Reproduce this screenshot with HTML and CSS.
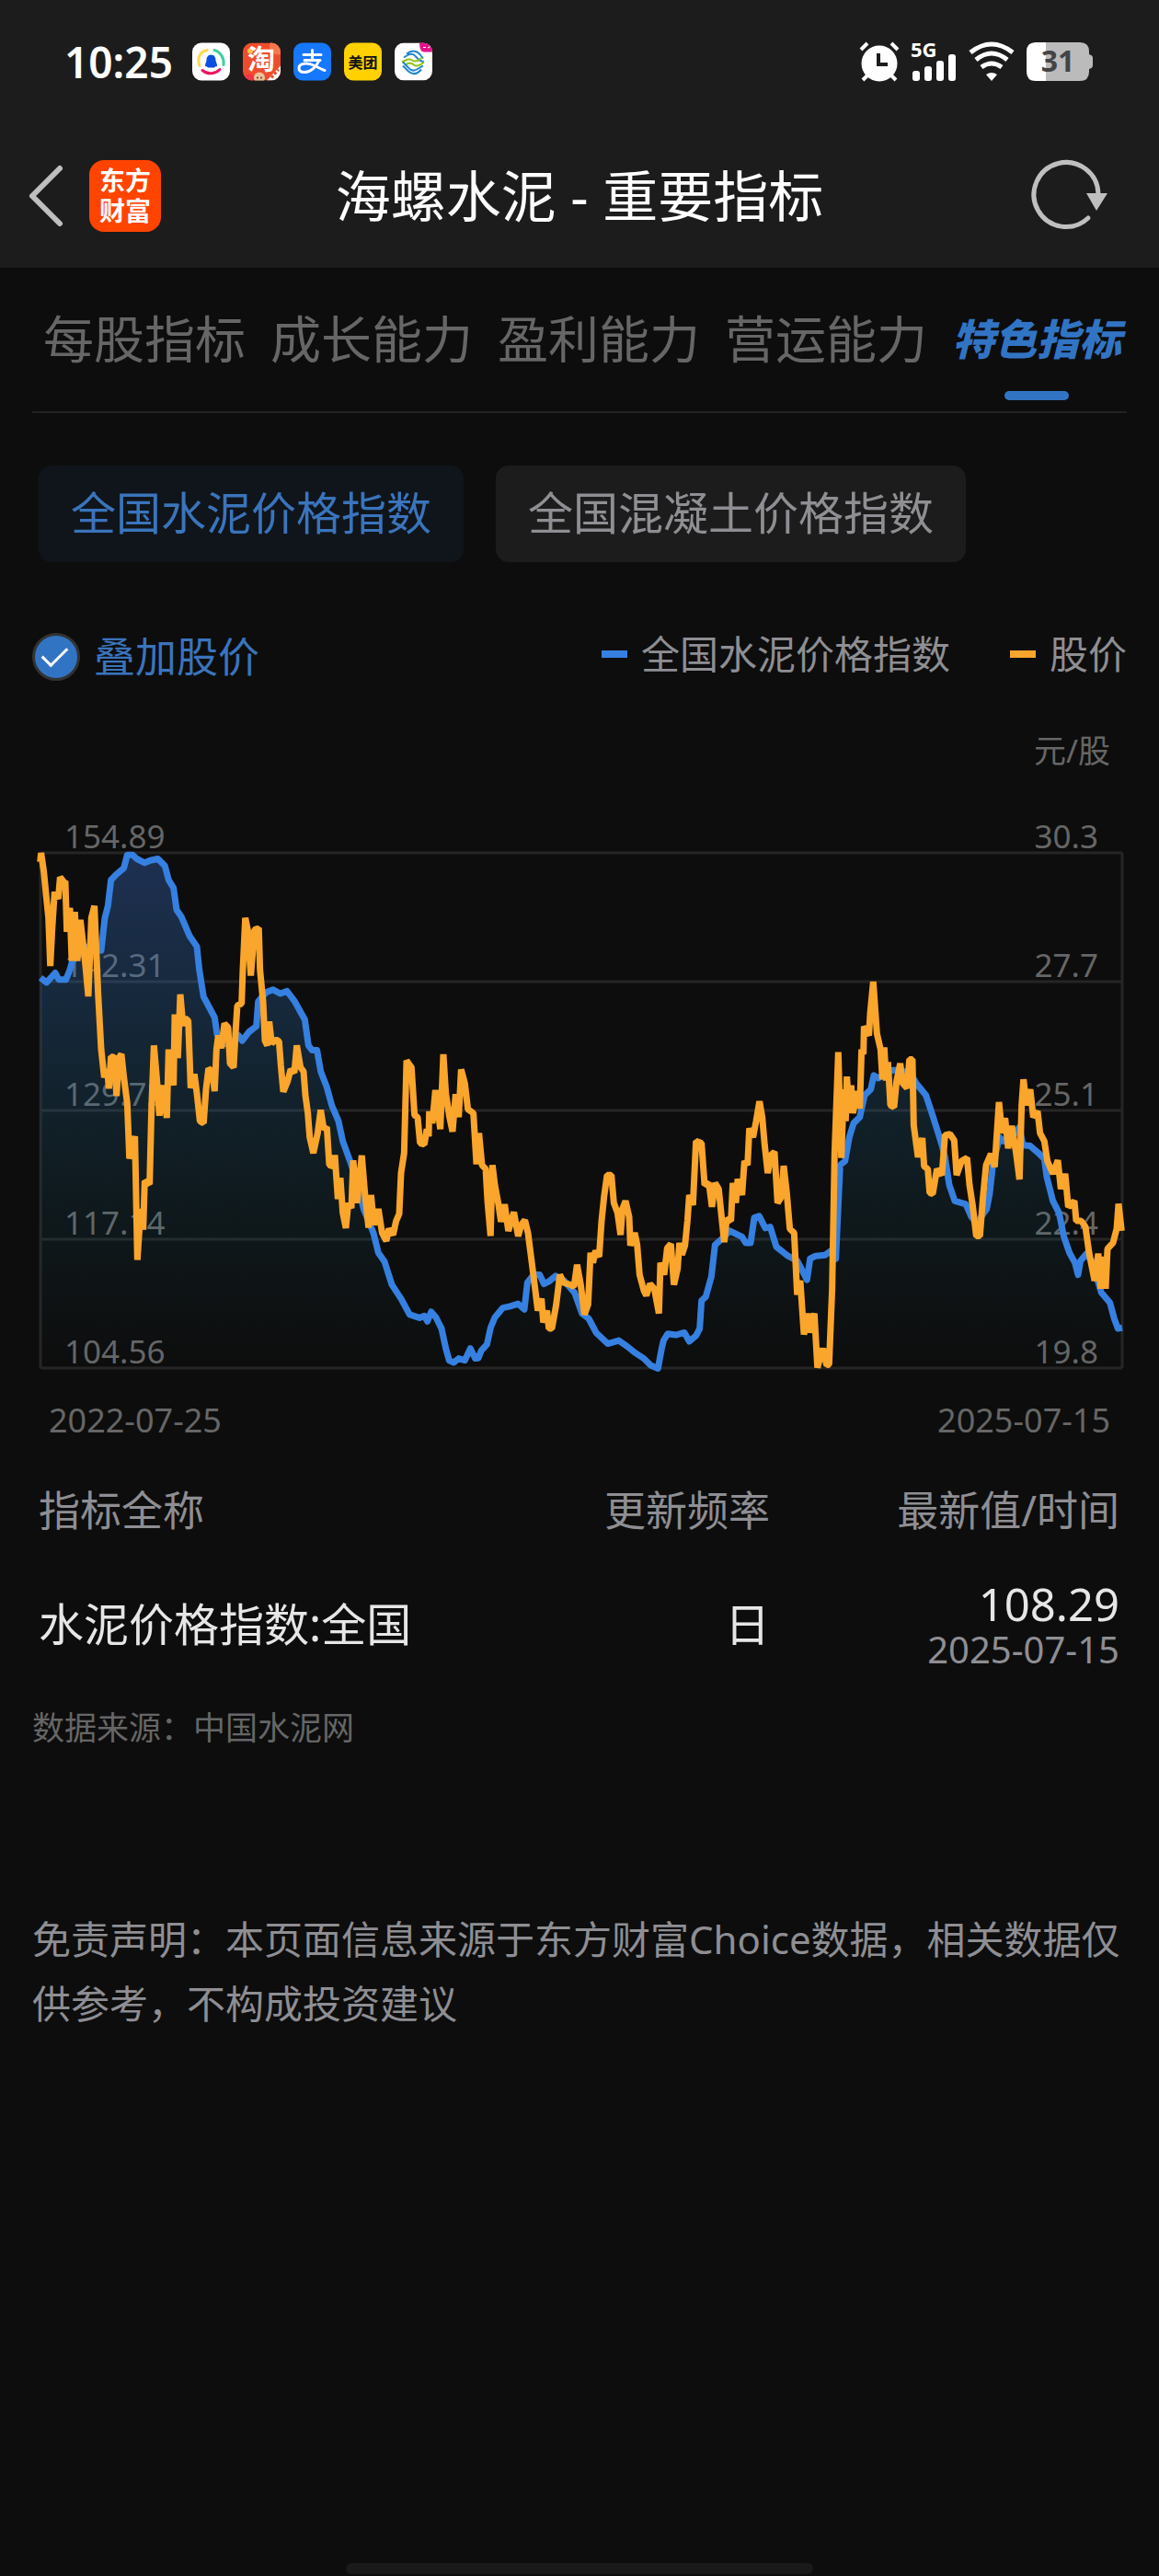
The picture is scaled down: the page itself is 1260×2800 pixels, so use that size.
FILE: index.html
```
<!DOCTYPE html>
<html lang="zh-CN">
<head>
	<meta charset="utf-8">
	<meta name="viewport" content="width=device-width, initial-scale=1.0">
	<title>海螺水泥 - 重要指标</title>
	<link rel="stylesheet" href="styles.css">
</head>
<body>

	<header class="top">
		<div class="status">
			<span class="time">10:25</span>
			<div class="apps">
				<svg class="app" viewBox="0 0 41 41">
					<rect width="41" height="41" rx="10" fill="#fff"/>
					<g fill="none" stroke-width="3" stroke-linecap="round">
						<path d="M8 25C5 17 8 10 16 8" stroke="#ffd84d"/>
						<path d="M24 8c7 2 11 9 10 16" stroke="#3fd0a4"/>
						<path d="M11 30c6 5 14 4 19-1" stroke="#ec1561"/>
					</g>
					<path d="M20.500 13c3.500 0 5 3 5 6 0 2 1.500 3 1.500 6 0 1-1 1-1.500.5L24 27h-7l-1.500-1.500c-.5.5-1.500.5-1.500-.5 0-3 1.500-4 1.500-6 0-3 1.500-6 5-6z" fill="#0a4fe0"/>
				</svg>
				<svg class="app" viewBox="0 0 41 41">
					<clipPath id="round"><rect width="41" height="41" rx="10"/></clipPath>
					<g clip-path="url(#round)">
						<rect width="41" height="41" fill="#ee4d2d"/>
						<circle cx="38" cy="4" r="9" fill="#f7774d"/>
						<path d="M26 41 41 25v16z" fill="#fff"/>
						<path d="M31 38 39 29" stroke="#ee4d2d" stroke-width="3" stroke-dasharray="3 2"/>
						<circle cx="18" cy="38" r="6" fill="#e9c39c"/>
						<circle cx="7" cy="39" r="5" fill="#f0344c"/>
						<circle cx="16" cy="38" r="1" fill="#6a3b20"/>
						<circle cx="20" cy="38" r="1" fill="#6a3b20"/>
						<circle cx="8" cy="9" r="3" fill="#ffc24d"/>
					</g>
					<text x="20" y="28" class="glyph glyph-big" fill="#fff">淘</text>
				</svg>
				<svg class="app" viewBox="0 0 41 41">
					<rect width="41" height="41" rx="10" fill="#1677ff"/>
					<g fill="none" stroke="#fff" stroke-width="3" stroke-linecap="round">
						<path d="M11 13h19M20.500 8v11M12 19h17"/>
						<path d="M28 19c-3 7-9 13-16 13-4 0-6-2-6-4.500 0-6 10-6 17-2.500 5 2.500 8 4 11 5"/>
					</g>
				</svg>
				<svg class="app" viewBox="0 0 41 41">
					<rect width="41" height="41" rx="10" fill="#ffd100"/>
					<text x="20.500" y="27" class="glyph" fill="#111">美团</text>
				</svg>
				<svg class="app" viewBox="0 0 41 41">
					<clipPath id="round2"><rect width="41" height="41" rx="10"/></clipPath>
					<g clip-path="url(#round2)">
						<rect width="41" height="41" fill="#fff"/>
						<path d="M27 0h14v10h-9q-5 0-5-10z" fill="#e4108a"/>
						<path d="M31 5h3m2 0q1 2 3-2" stroke="#fff" stroke-width="1" fill="none"/>
						<g fill="none" stroke-width="2" stroke-linejoin="round">
							<path d="M13 12q8-6 14 0l4 5M10 16l5-3q5-2 8 2l4 4 5 2" stroke="#1f86cc"/>
							<path d="M8 21l4-2q4-2 7 0t7 0l4-3M11 24l5-2q3 0 5 2t7 0l4-3" stroke="#8fc31f"/>
							<path d="M9 25l6 6q7 6 14-2M9 21l6 6q4 5 9 2l7-4" stroke="#1f86cc"/>
						</g>
					</g>
				</svg>
			</div>
			<svg class="signals" viewBox="0 0 260 44">
				<!-- alarm -->
				<ellipse cx="22" cy="24" rx="19.500" ry="19.500" fill="#fff"/>
				<path d="M2 9 9 2M42 9l-7-7" stroke="#fff" stroke-width="4"/>
				<path d="M4 42l6-6M40 42l-6-6" stroke="#fff" stroke-width="4"/>
				<path d="M21 13v12h10" fill="none" stroke="#1c1c1c" stroke-width="4"/>
				<!-- network -->
				<text x="56" y="17" class="net">5G</text>
				<rect x="58" y="32" width="8" height="11" rx="3" fill="#fff"/>
				<rect x="71" y="27" width="8" height="16" rx="3" fill="#fff"/>
				<rect x="84" y="21" width="8" height="22" rx="3" fill="#fff"/>
				<rect x="97" y="14" width="8" height="29" rx="3" fill="#fff"/>
				<!-- wifi -->
				<g fill="none" stroke="#fff" stroke-width="5">
					<path d="M121 12q23-18 46 0"/>
					<path d="M127 20q17-14 34 0"/>
					<path d="M133 28q11-8 22 0"/>
				</g>
				<path d="M138 36q6-4 12 0l-6 7z" fill="#fff"/>
				<!-- battery -->
				<path d="M192 1h48q10 0 10 10v3q4 1 4 4v8q0 3-4 4v3q0 10-10 10h-48z" fill="#bbb"/>
				<path d="M203 1v42h-11q-10 0-10-10V11q0-10 10-10z" fill="#fff"/>
				<text x="216" y="33" class="level">31</text>
			</svg>
		</div>
		<div class="nav">
			<div class="nav-left">
				<button class="icon-button" aria-label="返回">
					<svg class="back" viewBox="0 0 38 66"><path d="M34 3 4 33l30 30" fill="none" stroke="#bfbfbf" stroke-width="6" stroke-linecap="round" stroke-linejoin="round"/></svg>
				</button>
				<a class="logo" href="#">东方<br>财富</a>
			</div>
			<h1 class="title">海螺水泥 - 重要指标</h1>
			<button class="icon-button refresh-button" aria-label="刷新">
				<svg class="refresh" viewBox="0 0 84 76">
					<path d="M62 62A35 35 0 1 1 73 36" fill="none" stroke="#bfbfbf" stroke-width="5" stroke-linecap="round"/>
					<path d="M60 35h23L71 54z" fill="#bfbfbf"/>
				</svg>
			</button>
		</div>
	</header>

	<main class="content">
		<nav class="tabs">
			<a class="tab" href="#">每股指标</a>
			<a class="tab" href="#">成长能力</a>
			<a class="tab" href="#">盈利能力</a>
			<a class="tab" href="#">营运能力</a>
			<a class="tab active" href="#">特色指标</a>
		</nav>

		<div class="chips">
			<button class="chip chip-on">全国水泥价格指数</button>
			<button class="chip">全国混凝土价格指数</button>
		</div>

		<div class="toolbar">
			<label class="overlay" for="overlay">
				<input class="check" id="overlay" type="checkbox" checked>
				叠加股价
			</label>
			<div class="legend">
				<span class="key key-blue">全国水泥价格指数</span>
				<span class="key key-orange">股价</span>
			</div>
		</div>

		<div class="unit">元/股</div>

		<div class="chart">
			<div class="axis">
				<span>154.89</span>
				<span>142.31</span>
				<span>129.72</span>
				<span>117.14</span>
				<span>104.56</span>
			</div>
			<div class="axis axis-right">
				<span>30.3</span>
				<span>27.7</span>
				<span>25.1</span>
				<span>22.4</span>
				<span>19.8</span>
			</div>
			<svg class="plot" viewBox="132 107 3528 1292" preserveAspectRatio="none">
				<defs>
					<linearGradient id="fade" gradientUnits="userSpaceOnUse" x1="0" y1="107" x2="0" y2="1399">
						<stop offset="0" stop-color="#3e6fce" stop-opacity=".36"/>
						<stop offset=".35" stop-color="#2b74b4" stop-opacity=".25"/>
						<stop offset=".7" stop-color="#1c6f8c" stop-opacity=".12"/>
						<stop offset="1" stop-color="#1c6f8c" stop-opacity="0"/>
					</linearGradient>
				</defs>
				<path class="grid" d="M132 107H3660M132 430H3660M132 753H3660M132 1076H3660M132 1399H3660M132 107V1399M3660 107V1399"/>
				<!-- same curve as the blue line, closed at the bottom of the plot -->
				<path fill="url(#fade)" d="M132 1399V420L152 432 180 408 192 425 215 425 228 400 236 378 260 362 278 342 330 352 342 270 352 240 362 175 378 162 404 145 415 112 432 112 446 122 472 132 490 126 515 122 538 140 550 175 566 195 576 250 592 268 618 315 642 342 650 400 664 468 700 520 708 562 730 585 755 588 778 565 790 578 812 556 836 542 842 480 858 465 870 456 890 450 914 460 936 454 960 478
					994 525 1006 590 1018 602 1034 602 1046 655 1066 695 1082 740 1104 780 1118 830 1144 885 1170 950 1186 1000 1218 1060 1234 1110 1254 1132 1278 1190 1308 1225 1336 1265 1368 1273 1384 1268 1394 1282 1406 1258 1422 1272 1440 1300 1454 1350 1465 1380 1480 1385 1496 1375 1516 1380 1534 1350 1550 1375 1560 1374 1570 1355 1588 1340 1600 1298 1614 1272 1640 1248 1664 1244 1690 1238 1710 1252 1720 1185 1740 1165 1760 1165 1774 1188 1790 1182 1812 1168 1840 1180 1874 1210 1898 1262 1920 1275
					1944 1310 1982 1338 2018 1330 2046 1345 2070 1360 2100 1375 2122 1392 2146 1399 2158 1350 2164 1330 2178 1313 2204 1316 2232 1310 2248 1332 2270 1318 2282 1300 2288 1230 2302 1220 2320 1170 2332 1090 2350 1078 2380 1055 2420 1070 2432 1085 2448 1085 2460 1022 2476 1018 2496 1048 2512 1045 2532 1095 2570 1118 2600 1130 2632 1178 2642 1125 2660 1118 2690 1116 2710 1105 2726 1125 2740 890 2756 880 2770 820 2784 785 2804 770 2820 715 2840 700 2850 665 2864 672
					2880 665 2910 652 2930 652 2970 660 2988 685 3020 715 3036 752 3060 810 3072 840 3082 870 3096 940 3114 980 3150 988 3168 1020 3186 1035 3218 1000 3228 960 3238 890 3260 820 3272 830 3300 820 3325 795 3336 840 3360 842 3390 862 3406 875 3414 920 3434 980 3454 1010 3470 1070 3488 1110 3506 1135 3516 1165 3524 1130 3544 1112 3560 1130 3592 1210 3620 1235 3634 1275 3646 1300 3660 1298V1399z"/>
				<path class="line line-blue" d="M132 420 152 432 180 408 192 425 215 425 228 400 236 378 260 362 278 342 330 352 342 270 352 240 362 175 378 162 404 145 415 112 432 112 446 122 472 132 490 126 515 122 538 140 550 175 566 195 576 250 592 268 618 315 642 342 650 400 664 468 700 520 708 562 730 585 755 588 778 565 790 578 812 556 836 542 842 480 858 465 870 456 890 450 914 460 936 454 960 478
					994 525 1006 590 1018 602 1034 602 1046 655 1066 695 1082 740 1104 780 1118 830 1144 885 1170 950 1186 1000 1218 1060 1234 1110 1254 1132 1278 1190 1308 1225 1336 1265 1368 1273 1384 1268 1394 1282 1406 1258 1422 1272 1440 1300 1454 1350 1465 1380 1480 1385 1496 1375 1516 1380 1534 1350 1550 1375 1560 1374 1570 1355 1588 1340 1600 1298 1614 1272 1640 1248 1664 1244 1690 1238 1710 1252 1720 1185 1740 1165 1760 1165 1774 1188 1790 1182 1812 1168 1840 1180 1874 1210 1898 1262 1920 1275
					1944 1310 1982 1338 2018 1330 2046 1345 2070 1360 2100 1375 2122 1392 2146 1400 2158 1350 2164 1330 2178 1313 2204 1316 2232 1310 2248 1332 2270 1318 2282 1300 2288 1230 2302 1220 2320 1170 2332 1090 2350 1078 2380 1055 2420 1070 2432 1085 2448 1085 2460 1022 2476 1018 2496 1048 2512 1045 2532 1095 2570 1118 2600 1130 2632 1178 2642 1125 2660 1118 2690 1116 2710 1105 2726 1125 2740 890 2756 880 2770 820 2784 785 2804 770 2820 715 2840 700 2850 665 2864 672
					2880 665 2910 652 2930 652 2970 660 2988 685 3020 715 3036 752 3060 810 3072 840 3082 870 3096 940 3114 980 3150 988 3168 1020 3186 1035 3218 1000 3228 960 3238 890 3260 820 3272 830 3300 820 3325 795 3336 840 3360 842 3390 862 3406 875 3414 920 3434 980 3454 1010 3470 1070 3488 1110 3506 1135 3516 1165 3524 1130 3544 1112 3560 1130 3592 1210 3620 1235 3634 1275 3646 1300 3660 1298"/>
				<path class="line line-orange" d="M131 130 134 107 143 155 150 210 158 270 164 391 170 300 178 205 190 222 196 168 208 180 213 178 218 305 228 245 234 378 244 255 252 378 262 275 272 340 280 400 288 467 294 350 298 270 308 240 314 350 320 460 330 600 340 670 350 650 355 698 362 618 373 620 380 717 388 620 396 612 404 670 415 735 422 874 440 818 448 1128 459 1000 467 1052 472 930 488 938 494 750 502 590 511 670 520 766 533 690 544 772 550 600 566 690 570 512 580 622 588 462 597 540 604 522 614 528 622 697 634 662 642 710 652 780 664 785 672 700 680 648 692 655 700 705 706 600 712 565 722 597 732 535 744 545 750 635 762 645 768 560 774 490 788 485 792 400 800 270 808 300 818 415 830 300 844 296 848 400 858 480 864 578 872 590 878 530 886 585 900 575 910 580 916 640 924 706 938 680 948 650
					960 658 968 590 980 645 990 655 996 715 1004 760 1010 820 1022 860 1036 810 1046 752 1056 800 1066 795 1074 890 1086 893 1092 865 1102 975 1110 922 1118 1010 1128 1048 1136 985 1146 998 1152 878 1164 985 1180 866 1190 960 1202 1047 1210 965 1220 1040 1234 1000 1246 1060 1260 1080 1268 1050 1282 1065 1292 1030 1302 1012 1308 910 1318 860 1326 628 1342 645 1352 765 1362 770 1370 835 1384 838 1392 800 1398 818 1400 755 1410 785 1420 702 1436 800 1446 612 1454 710 1466 770 1476 806 1486 712 1496 770 1504 650 1516 685 1526 750 1544 760 1554 888 1562 810 1572 890 1584 900 1590 980 1600 1068 1606 890 1614 940 1626 990 1634 1032 1646 988 1658 1055 1676 1008 1690 1068 1700 1040 1712 1028 1722 1060 1732 1120 1742 1180 1754 1255 1766 1225 1772 1285 1784 1255 1790 1300 1800 1300 1814 1240 1826 1165 1838 1185 1860 1190 1872 1195 1882 1140 1894 1190 1906 1265 1918 1240
					1926 1110 1934 1135 1942 1105 1954 1120 1962 1030 1970 970 1980 915 1994 915 2002 985 2014 1010 2024 1065 2030 1000 2040 980 2052 1020 2056 1092 2070 1060 2078 1090 2086 1165 2100 1205 2108 1217 2120 1188 2134 1200 2149 1262 2154 1135 2166 1165 2176 1098 2188 1088 2198 1190 2210 1150 2216 1085 2224 1115 2234 1092 2242 1030 2248 965 2260 990 2270 830 2288 835 2298 940 2312 935 2322 995 2332 935 2344 950 2352 1010 2362 1083 2370 1025 2384 1030 2390 935 2400 985 2406 925 2420 965 2428 880 2438 890 2444 798 2456 820 2466 780 2477 730 2486 770 2494 840 2504 910 2514 865 2526 857 2536 985 2548 970 2556 892 2566 960 2576 1050 2590 1060 2600 1215 2610 1180 2622 1315 2634 1262 2640 1310 2656 1262 2666 1398 2684 1350 2696 1392 2704 1390 2714 1200 2722 860 2734 607 2744 872 2752 700 2758 780 2762 668 2770 760 2776 690 2782 760 2794 705 2804 748 2810 600 2816 612 2818 542 2834 565 2838 510 2848 430
					2860 560 2872 600 2878 675 2884 595 2890 678 2896 632 2904 740 2916 745 2924 680 2936 635 2944 685 2958 697 2966 625 2976 625 2980 790 2994 870 3008 822 3014 893 3026 900 3032 960 3042 962 3056 900 3072 915 3082 815 3098 812 3112 828 3120 915 3136 880 3154 872 3162 940 3172 990 3184 1068 3196 1068 3206 970 3216 890 3232 862 3244 895 3258 732 3268 810 3278 772 3288 848 3300 792 3314 860 3325 926 3332 740 3338 675 3348 740 3360 700 3370 770 3384 755 3392 810 3406 830 3416 880 3434 912 3450 878 3460 950 3474 912 3484 995 3504 980 3510 1030 3526 1030 3540 1045 3552 1110 3570 1180 3582 1112 3590 1200 3600 1120 3606 1200 3612 1100 3630 1085 3642 1050 3648 987 3658 1055"/>
			</svg>
		</div>
		<div class="dates">
			<span>2022-07-25</span>
			<span>2025-07-15</span>
		</div>

		<table class="detail">
			<thead>
				<tr>
					<th class="name">指标全称</th>
					<th>更新频率</th>
					<th class="latest">最新值/时间</th>
				</tr>
			</thead>
			<tbody>
				<tr>
					<td class="name">水泥价格指数:全国</td>
					<td>日</td>
					<td class="latest">
						<div class="value">108.29</div>
						<div class="day">2025-07-15</div>
					</td>
				</tr>
			</tbody>
		</table>

		<p class="source">数据来源：中国水泥网</p>
		<p class="disclaimer">免责声明：本页面信息来源于东方财富Choice数据，相关数据仅供参考，不构成投资建议</p>
	</main>

	<div class="home-bar"></div>

</body>
</html>
```
FILE: styles.css
```
* {
	box-sizing: border-box;
}

body {
	margin: 0;
	min-height: 100vh;
	display: flex;
	flex-direction: column;
	background: #0d0d0d;
	color: #8e8e93;
	font-family: "Noto Sans", "Noto Sans CJK SC", sans-serif;
}

button {
	border: 0;
	padding: 0;
	background: none;
	font-family: inherit;
}

a {
	color: inherit;
	text-decoration: none;
}

svg {
	display: block;
	overflow: visible;
}

/* header */
.top {
	background: #1c1c1c;
}

.status {
	display: flex;
	align-items: center;
	height: 134px;
	padding: 0 66px 0 70px;
}

.time {
	color: #fff;
	font-size: 46px;
	font-weight: 600;
	line-height: 50px;
}

.apps {
	display: flex;
	gap: 14px;
	margin-left: 21px;
}

.app {
	width: 41px;
	height: 42px;
}

.glyph {
	font-family: "Noto Sans CJK SC", sans-serif;
	font-size: 16px;
	font-weight: 700;
	text-anchor: middle;
}

.glyph-big {
	font-size: 30px;
}

.signals {
	width: 260px;
	height: 44px;
	margin-left: auto;
}

.net {
	fill: #fff;
	font-size: 22px;
	font-weight: 700;
}

.level {
	fill: #444;
	font-size: 32px;
	font-weight: 700;
	text-anchor: middle;
}

.nav {
	display: grid;
	grid-template-columns: 1fr auto 1fr;
	align-items: center;
	height: 157px;
	padding: 0 55px 0 31px;
}

.nav-left {
	display: flex;
	align-items: center;
	gap: 28px;
}

.back {
	width: 38px;
	height: 66px;
}

.logo {
	width: 78px;
	height: 78px;
	padding-top: 6px;
	border-radius: 16px;
	background: #ff4400;
	color: #fff;
	font-size: 28px;
	font-weight: 700;
	line-height: 33px;
	text-align: center;
}

.title {
	margin: 0 0 0 24px;
	color: #fff;
	font-size: 60px;
	font-weight: 400;
	line-height: 80px;
}

.refresh-button {
	justify-self: end;
}

.refresh {
	width: 84px;
	height: 76px;
}

/* page */
.content {
	padding: 0 35px;
}

.tabs {
	display: flex;
	justify-content: space-between;
	padding: 42px 6px 12px 12px;
	border-bottom: 2px solid #222;
}

.tab {
	color: #666;
	font-size: 55px;
	line-height: 70px;
	white-space: nowrap;
}

.active {
	color: #3274c4;
	font-size: 46px;
	font-style: italic;
	font-weight: 900;
}

.active::after {
	content: "";
	display: block;
	width: 70px;
	height: 10px;
	margin: 22px auto 0;
	border-radius: 5px;
	background: #3274c4;
}

.chips {
	display: flex;
	gap: 35px;
	margin-top: 57px;
	padding-left: 7px;
}

.chip {
	height: 105px;
	padding: 0 35px 8px;
	border-radius: 14px;
	background: #1c1c1c;
	color: #8e8e93;
	font-size: 49px;
}

.chip-on {
	background: #10151b;
	color: #3a74bc;
}

.toolbar {
	display: flex;
	justify-content: space-between;
	align-items: center;
	margin-top: 73px;
}

.overlay {
	display: flex;
	align-items: center;
	gap: 15px;
	color: #3a74bc;
	font-size: 45px;
	line-height: 60px;
}

.check {
	appearance: none;
	width: 52px;
	height: 52px;
	margin: 0;
	border: 3px solid #333;
	border-radius: 50%;
	display: grid;
	place-items: center;
}

.check:checked {
	background: #3274c4;
}

.check:checked::before {
	content: "";
	width: 24px;
	height: 12px;
	margin: 0 4px 8px 0;
	border: solid #fff;
	border-width: 0 0 3px 3px;
	transform: rotate(-45deg);
}

.legend {
	display: flex;
	gap: 65px;
	padding-bottom: 6px;
	font-size: 42px;
	line-height: 54px;
}

.key {
	display: flex;
	align-items: center;
	gap: 15px;
}

.key::before {
	content: "";
	width: 28px;
	height: 8px;
	background: #3580e0;
}

.key-orange::before {
	background: #faa52b;
}

.unit {
	margin-top: 52px;
	padding-right: 18px;
	color: #666;
	font-size: 35px;
	line-height: 40px;
	text-align: right;
}

/* axis labels and plot share one cell, so the fill tints the labels */
.chart {
	display: grid;
	margin: 53px 5px 0 9px;
}

.axis,
.plot {
	grid-area: 1 / 1;
}

.axis {
	display: flex;
	flex-direction: column;
	justify-content: space-between;
	padding: 0 26px;
	color: #666;
	font-size: 35px;
	line-height: 40px;
}

.axis-right {
	text-align: right;
}

.plot {
	width: 100%;
	height: 560px;
	margin: 38px 0 2px;
}

.grid {
	fill: none;
	stroke: #fff;
	stroke-opacity: .1;
	stroke-width: 3px;
	vector-effect: non-scaling-stroke;
}

.line {
	fill: none;
	stroke-width: 7px;
	stroke-linejoin: bevel;
	vector-effect: non-scaling-stroke;
}

.line-blue {
	stroke: #3580e0;
	stroke-linejoin: round;
}

.line-orange {
	stroke: #faa52b;
}

.dates {
	display: flex;
	justify-content: space-between;
	margin-top: 35px;
	padding: 0 18px;
	color: #666;
	font-size: 36px;
	line-height: 40px;
}

/* table */
.detail {
	width: 100%;
	margin-top: 48px;
	border-collapse: collapse;
	table-layout: fixed;
}

.detail th,
.detail td {
	padding: 0;
	text-align: right;
}

.detail th {
	font-size: 45px;
	font-weight: 400;
	line-height: 60px;
}

.detail td {
	padding-top: 43px;
	color: #e6e6e6;
	font-size: 49px;
	line-height: 56px;
}

.detail .name {
	width: 480px;
	padding-left: 7px;
	text-align: left;
}

.detail .latest {
	width: 388px;
	padding-right: 8px;
}

.day {
	color: #8e8e93;
	font-size: 40px;
	line-height: 44px;
}

.source {
	margin: 43px 0 0;
	color: #666;
	font-size: 35px;
	line-height: 40px;
}

.disclaimer {
	margin: 175px 0 0;
	font-size: 42px;
	line-height: 70px;
}

.home-bar {
	width: 508px;
	height: 12px;
	margin: auto auto 2px;
	border-radius: 6px;
	background: #1a1a1a;
}
```
